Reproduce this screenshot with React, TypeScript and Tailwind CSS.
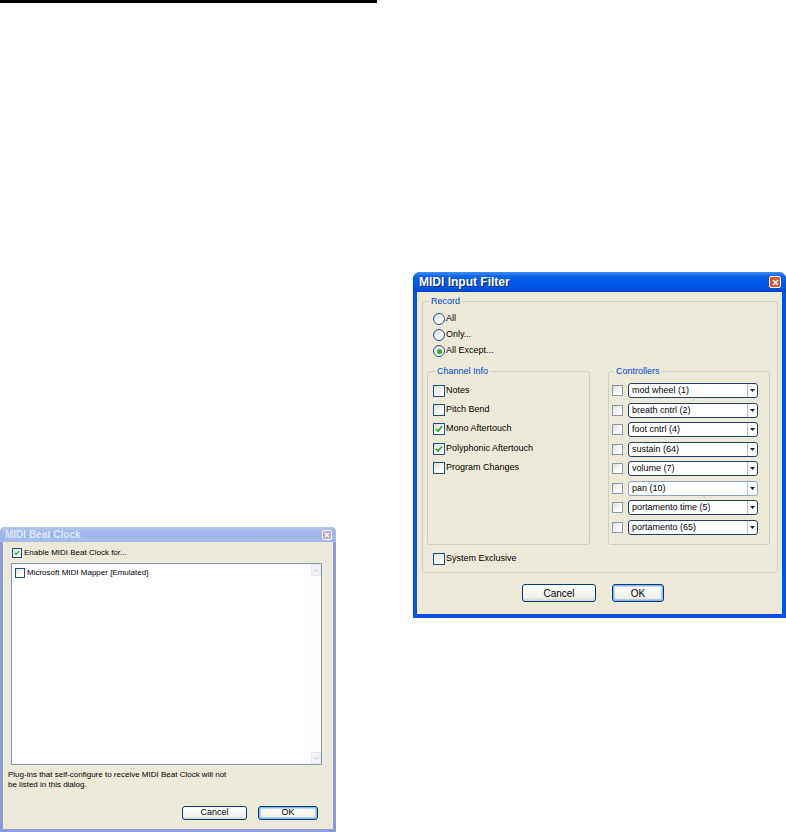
import React from 'react'

const font = { fontFamily: '"Liberation Sans", Arial, sans-serif' }

function Check({ checked = false, size = 12, light = false }: { checked?: boolean; size?: number; light?: boolean }) {
  return (
    <span
      className={`inline-flex shrink-0 items-center justify-center border bg-[linear-gradient(135deg,#dcdcd7,#ffffff_70%)] ${light ? 'border-[#8a98ab]' : 'border-[#1c5180]'}`}
      style={{ width: size, height: size }}
    >
      {checked && (
        <svg width={size - 4} height={size - 4} viewBox="0 0 8 8">
          <path d="M1 4 L3 6 L7 1.5" fill="none" stroke="#21a121" strokeWidth="1.6" />
        </svg>
      )}
    </span>
  )
}

function Radio({ checked = false }: { checked?: boolean }) {
  return (
    <span className="inline-flex h-[12px] w-[12px] shrink-0 items-center justify-center rounded-full border border-[#1c5180] bg-[linear-gradient(135deg,#dcdcd7,#ffffff_70%)]">
      {checked && <span className="h-[5px] w-[5px] rounded-full bg-[#2ba52b]" />}
    </span>
  )
}

function CloseBtn({ active }: { active: boolean }) {
  return (
    <span
      className={`flex shrink-0 items-center justify-center rounded-[2px] border border-white ${
        active ? 'h-[12px] w-[12px] bg-[#e0552d]' : 'h-[10px] w-[10px] bg-[#b8a6d6]'
      }`}
    >
      <svg width={active ? 7 : 6} height={active ? 7 : 6} viewBox="0 0 7 7">
        <path d="M1 1 L6 6 M6 1 L1 6" stroke="white" strokeWidth="1.6" />
      </svg>
    </span>
  )
}

function Combo({ label, dim = false }: { label: string; dim?: boolean }) {
  return (
    <div
      className={`flex h-[15px] w-[130px] items-center rounded-[3px] border bg-white ${dim ? 'border-[#8fa3bf]' : 'border-[#233f66]'}`}
    >
      <span className="flex-1 pl-[3px] text-[9px] leading-none text-black">{label}</span>
      <span className="flex h-full w-[10px] items-center justify-center border-l border-[#b5bfcc]">
        <svg width="5" height="3" viewBox="0 0 5 3">
          <path d="M0 0 L5 0 L2.5 3 Z" fill="#222" />
        </svg>
      </span>
    </div>
  )
}

function XpButton({ label, w, h, def = false, size = 10 }: { label: string; w: number; h: number; def?: boolean; size?: number }) {
  return (
    <button
      className={`flex items-center justify-center rounded-[3px] border border-[#003c74] bg-[linear-gradient(to_bottom,#ffffff,#f0f0ea_80%,#d6d0c5)] text-black ${
        def ? 'shadow-[inset_0_0_0_1.5px_#8cb4f2]' : ''
      }`}
      style={{ width: w, height: h, fontSize: size }}
    >
      {label}
    </button>
  )
}

const controllers = [
  'mod wheel (1)',
  'breath cntrl (2)',
  'foot cntrl (4)',
  'sustain (64)',
  'volume (7)',
  'pan (10)',
  'portamento time (5)',
  'portamento (65)',
]

const channelInfo: [string, boolean][] = [
  ['Notes', false],
  ['Pitch Bend', false],
  ['Mono Aftertouch', true],
  ['Polyphonic Aftertouch', true],
  ['Program Changes', false],
]

function InputFilter() {
  return (
    <div className="absolute left-[413px] top-[272px] flex h-[346px] w-[373px] flex-col rounded-t-[7px] bg-[#0553e0]">
      <div className="flex h-[20px] items-center justify-between rounded-t-[7px] bg-[linear-gradient(to_bottom,#3d8ef7,#0a5fe4_25%,#0054e3_75%,#0046c4)] pl-[6px] pr-[5px]">
        <span className="text-[12px] font-bold text-white [text-shadow:1px_1px_0_#0a2a7a]">MIDI Input Filter</span>
        <CloseBtn active />
      </div>
      <div className="mx-[4px] mb-[4px] flex flex-1 flex-col bg-[#ece9d8] pt-[4px]">
        <fieldset className="ml-[5px] w-[356px] rounded-[3px] border border-[#d0d0bf] px-[4px] pb-[6px]">
          <legend className="ml-[2px] px-[2px] text-[9px] leading-[11px] text-[#0046d5]">Record</legend>
          <div className="flex flex-col pl-[6px] pt-[4px]">
            {[
              ['All', false],
              ['Only...', false],
              ['All Except...', true],
            ].map(([l, c]) => (
              <div key={l as string} className="flex h-[16px] items-center gap-[1px] text-[9px] text-black">
                <Radio checked={c as boolean} />
                <span>{l as string}</span>
              </div>
            ))}
          </div>
          <div className="mt-[7px] flex gap-[18px]">
            <fieldset className="w-[163px] rounded-[3px] border border-[#d0d0bf] pl-[5px] pt-[4px]">
              <legend className="ml-[2px] px-[2px] text-[9px] leading-[11px] text-[#0046d5]">Channel Info</legend>
              {channelInfo.map(([l, c]) => (
                <div key={l} className="flex h-[19.3px] items-center gap-[1px] text-[9px] text-black">
                  <Check checked={c} />
                  <span>{l}</span>
                </div>
              ))}
            </fieldset>
            <fieldset className="w-[162px] rounded-[3px] border border-[#d0d0bf] pb-[7px] pl-[3px] pt-[4px]">
              <legend className="ml-[2px] px-[2px] text-[9px] leading-[11px] text-[#0046d5]">Controllers</legend>
              {controllers.map((c) => (
                <div key={c} className="flex h-[19.5px] items-center gap-[5px]">
                  <Check size={11} light />
                  <Combo label={c} dim={c === 'pan (10)'} />
                </div>
              ))}
            </fieldset>
          </div>
          <div className="mt-[7px] flex h-[14px] items-center gap-[1px] pl-[6px] text-[9px] text-black">
            <Check />
            <span>System Exclusive</span>
          </div>
        </fieldset>
        <div className="mt-[11px] flex gap-[16px] pl-[105px]">
          <XpButton label="Cancel" w={74} h={18} />
          <XpButton label="OK" w={52} h={18} def />
        </div>
      </div>
    </div>
  )
}

function BeatClock() {
  return (
    <div className="absolute left-0 top-[527px] flex h-[305px] w-[336px] flex-col rounded-t-[5px] bg-[#8e9ad8]">
      <div className="flex h-[15px] items-center justify-between rounded-t-[5px] bg-[linear-gradient(to_bottom,#b4c6f0,#9fb5e9_40%,#a7bbeb)] pl-[5px] pr-[4px]">
        <span className="text-[10px] font-bold text-[#dfe7f8]">MIDI Beat Clock</span>
        <CloseBtn active={false} />
      </div>
      <div className="mx-[3px] mb-[3px] flex flex-1 flex-col bg-[#ece9d8] text-[8px] text-black">
        <div className="mt-[5px] flex h-[12px] items-center gap-[2px] pl-[9px]">
          <Check size={10} checked />
          <span>Enable MIDI Beat Clock for...</span>
        </div>
        <div className="ml-[8px] mt-[4px] flex h-[202px] w-[311px] border border-[#7f9db9] bg-white">
          <div className="flex-1 pl-[3px] pt-[3px]">
            <div className="flex h-[12px] items-center gap-[2px]">
              <Check size={10} />
              <span>Microsoft MIDI Mapper [Emulated]</span>
            </div>
          </div>
          <div className="flex w-[10px] flex-col justify-between bg-[#fbfbf9]">
            <span className="flex h-[12px] items-center justify-center rounded-[2px] border border-[#e3e6ef] bg-[#f2f3f6]">
              <svg width="5" height="3" viewBox="0 0 5 3">
                <path d="M0 3 L2.5 0.5 L5 3" fill="none" stroke="#c3c8d6" strokeWidth="1" />
              </svg>
            </span>
            <span className="flex h-[12px] items-center justify-center rounded-[2px] border border-[#e3e6ef] bg-[#f2f3f6]">
              <svg width="5" height="3" viewBox="0 0 5 3">
                <path d="M0 0 L2.5 2.5 L5 0" fill="none" stroke="#c3c8d6" strokeWidth="1" />
              </svg>
            </span>
          </div>
        </div>
        <div className="mt-[5px] pl-[5px] leading-[10px]">
          Plug-ins that self-configure to receive MIDI Beat Clock will not
          <br />
          be listed in this dialog.
        </div>
        <div className="mt-[16px] flex justify-end gap-[11px] pr-[15px]">
          <XpButton label="Cancel" w={65} h={14} size={9} />
          <XpButton label="OK" w={60} h={14} size={9} def />
        </div>
      </div>
    </div>
  )
}

export default function App() {
  return (
    <div className="relative h-[832px] w-[786px] overflow-hidden bg-white" style={font}>
      <div className="h-[3px] w-[377px] bg-black" />
      <InputFilter />
      <BeatClock />
    </div>
  )
}
